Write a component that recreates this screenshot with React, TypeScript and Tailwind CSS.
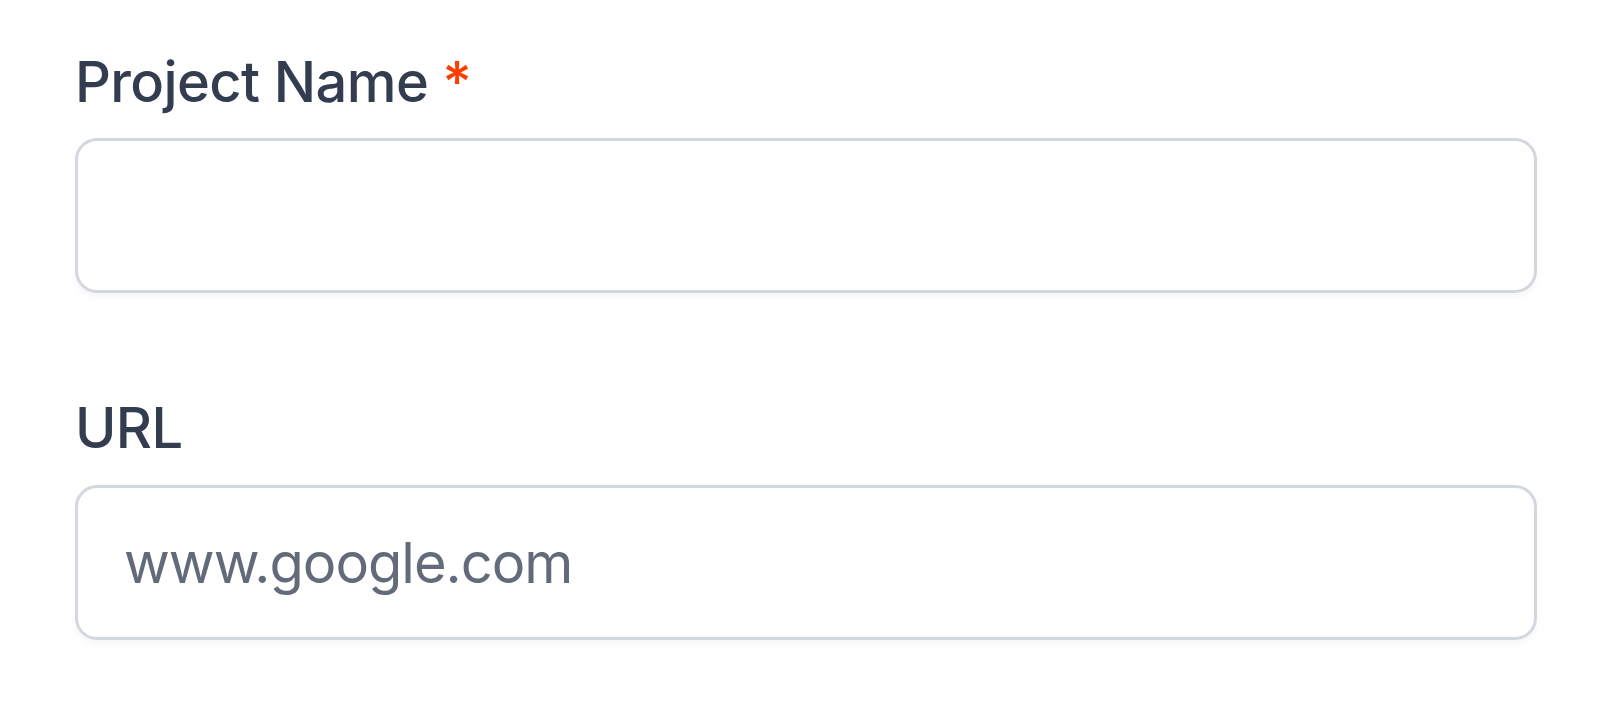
import React from "react";

export default function App() {
  return (
    <div
      className="min-h-[723px] w-[1600px] bg-white pl-[75px] pt-[42px]"
      style={{ fontFamily: "Inter, 'Noto Sans', sans-serif" }}
    >
      <div className="w-[1462px]">
        <label className="block text-[56px] leading-[80px] font-medium tracking-[-0.6px] text-[#333d4f]">
          Project Name <span className="text-[#ff3d00]">*</span>
        </label>
        <input
          type="text"
          className="mt-[16px] block h-[155px] w-full rounded-[22px] border-[3px] border-[#d3d7de] bg-white px-[46px] text-[56px] tracking-[-1px] text-[#636a79] shadow-[0_4px_6px_rgba(0,0,0,0.04)] outline-none"
        />
        <label className="mt-[95px] block text-[56px] leading-[80px] font-medium tracking-[-0.6px] text-[#333d4f]">
          URL
        </label>
        <input
          type="text"
          placeholder="www.google.com"
          className="mt-[17px] block h-[155px] w-full rounded-[22px] border-[3px] border-[#d3d7de] bg-white px-[46px] text-[56px] tracking-[-1px] text-[#636a79] placeholder:text-[#636a79] shadow-[0_4px_6px_rgba(0,0,0,0.04)] outline-none"
        />
      </div>
    </div>
  );
}
